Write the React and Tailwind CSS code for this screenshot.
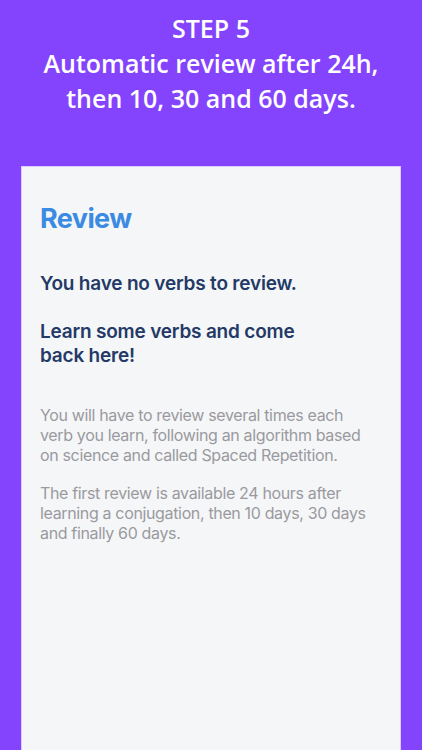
export default function App() {
  return (
    <div className="w-[422px] h-[750px] bg-[#8443fd] flex flex-col overflow-hidden">
      <div className="h-[166px] shrink-0 pt-[11px] text-center text-white font-semibold text-[25px] leading-[35px] [font-family:'Open_Sans',sans-serif]">
        <div>STEP 5</div>
        <div>Automatic review after 24h,</div>
        <div>then 10, 30 and 60 days.</div>
      </div>
      <div className="mx-[21px] flex-1 bg-[#f5f6f8] border-x border-t border-[#dccbfd] pt-[36px] px-[18px] [font-family:Inter,sans-serif]">
        <div className="text-[27px] leading-[32px] font-bold tracking-[-0.6px] text-[#3a8be1]">Review</div>
        <div className="mt-[37px] text-[19px] leading-[24px] font-semibold tracking-[-0.2px] text-[#243a66]">
          You have no verbs to review.
        </div>
        <div className="mt-[24px] text-[19px] leading-[24px] font-semibold tracking-[-0.2px] text-[#243a66]">
          Learn some verbs and come
          <br />
          back here!
        </div>
        <div className="mt-[37px] pr-[8px] text-[16px] leading-[20px] tracking-[-0.35px] text-[#9a9a9e]">
          You will have to review several times each verb you learn, following an algorithm based on science and called Spaced Repetition.
        </div>
        <div className="mt-[18px] pr-[8px] text-[16px] leading-[20px] tracking-[-0.35px] text-[#9a9a9e]">
          The first review is available 24 hours after learning a conjugation, then 10 days, 30 days and finally 60 days.
        </div>
      </div>
    </div>
  );
}
